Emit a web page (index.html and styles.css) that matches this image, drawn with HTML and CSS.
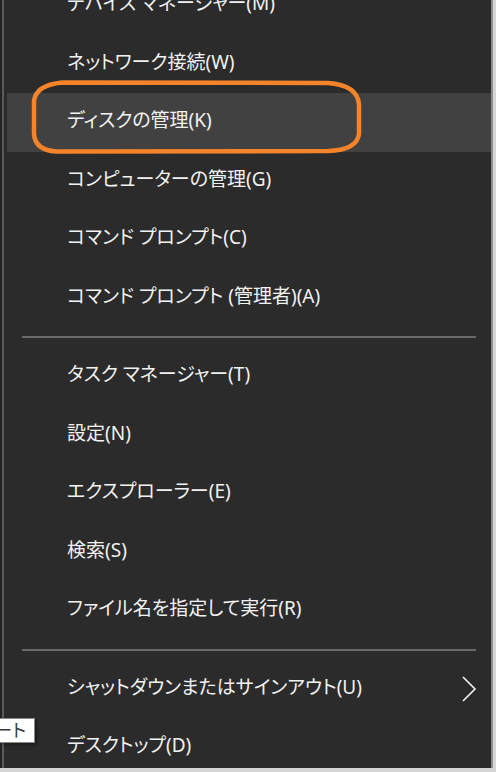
FILE: index.html
```html
<!DOCTYPE html>
<html lang="ja">
<head>
  <meta charset="UTF-8">
  <title>Win+X メニュー</title>
  <link rel="stylesheet" href="styles.css">
</head>
<body>

  <div class="screen">
    <div class="edge"></div>

    <div class="menu">
      <div class="item">デバイス マネージャー(M)</div>
      <div class="item">ネットワーク接続(W)</div>
      <div class="item active">ディスクの管理(K)</div>
      <div class="item">コンピューターの管理(G)</div>
      <div class="item">コマンド プロンプト(C)</div>
      <div class="item">コマンド プロンプト (管理者)(A)</div>
      <div class="sep"></div>
      <div class="item">タスク マネージャー(T)</div>
      <div class="item">設定(N)</div>
      <div class="item">エクスプローラー(E)</div>
      <div class="item">検索(S)</div>
      <div class="item">ファイル名を指定して実行(R)</div>
      <div class="sep"></div>
      <div class="item has-sub">
        <span>シャットダウンまたはサインアウト(U)</span>
        <svg class="chevron" width="16" height="28" viewBox="0 0 16 28">
          <path d="M2 2 L14 14 L2 26" fill="none" stroke="#f2f2f2" stroke-width="1.6"/>
        </svg>
      </div>
      <div class="item">デスクトップ(D)</div>
    </div>
  </div>

  <!-- hand drawn marker round the selected item -->
  <svg class="marker" width="496" height="772" viewBox="0 0 496 772">
    <path d="M62 82.5 L328 83 Q357 85 359 104 L359 134 Q357 150 328 151 L56 151.5 Q35 150 34 134 L34 101 Q36 85 62 82.5 Z"
          fill="none" stroke="#f5832a" stroke-width="4.5"/>
  </svg>

  <div class="tip">ート</div>

</body>
</html>
```

FILE: styles.css
```css
body {
  margin: 0;
  width: 496px;
  height: 772px;
  overflow: hidden;
  background: #d6d6d6;
  font-family: "Noto Sans", "Noto Sans CJK JP", sans-serif;
  position: relative;
}

.screen {
  display: flex;
  height: 768px;
  width: 493px;
}

.edge {
  width: 5px;
  background: linear-gradient(to right, #232323 0, #232323 2px, #5a5a5a 2px, #5a5a5a 4px, #2b2b2b 4px);
}

.menu {
  flex: 1;
  background: #2b2b2b;
  padding-left: 2px;
  overflow: hidden;
  border-right: 2px solid #8e8e8e;
}

.item {
  height: 58.5px;
  box-sizing: border-box;
  display: flex;
  align-items: center;
  padding: 0 15px 6px 60px;
  color: #f2f2f2;
  font-size: 19px;
  font-feature-settings: "palt";
  white-space: nowrap;
}

.item:first-child {
  margin-top: -24px;
}

.item.active {
  background: #414141;
}

.has-sub {
  justify-content: space-between;
}

.chevron {
  display: block;
  margin-top: 6px;
  margin-right: -1px;
}

.sep {
  height: 20px;
  display: flex;
  align-items: center;
  padding: 0 15px;
}

.sep::after {
  content: "";
  flex: 1;
  height: 2px;
  background: #6a6a6a;
}

.marker {
  position: absolute;
  left: 0;
  top: 0;
  pointer-events: none;
}

.tip {
  position: absolute;
  left: 0;
  top: 718px;
  width: 35px;
  height: 25px;
  background: #ffffff;
  border: 1px solid #8a8a8a;
  border-left: none;
  box-shadow: 2px 2px 3px rgba(0, 0, 0, 0.35);
  color: #3a3a3a;
  font-size: 18px;
  line-height: 23px;
  white-space: nowrap;
  overflow: hidden;
  direction: rtl;
  padding-right: 8px;
  box-sizing: border-box;
  font-feature-settings: "palt";
}
```
